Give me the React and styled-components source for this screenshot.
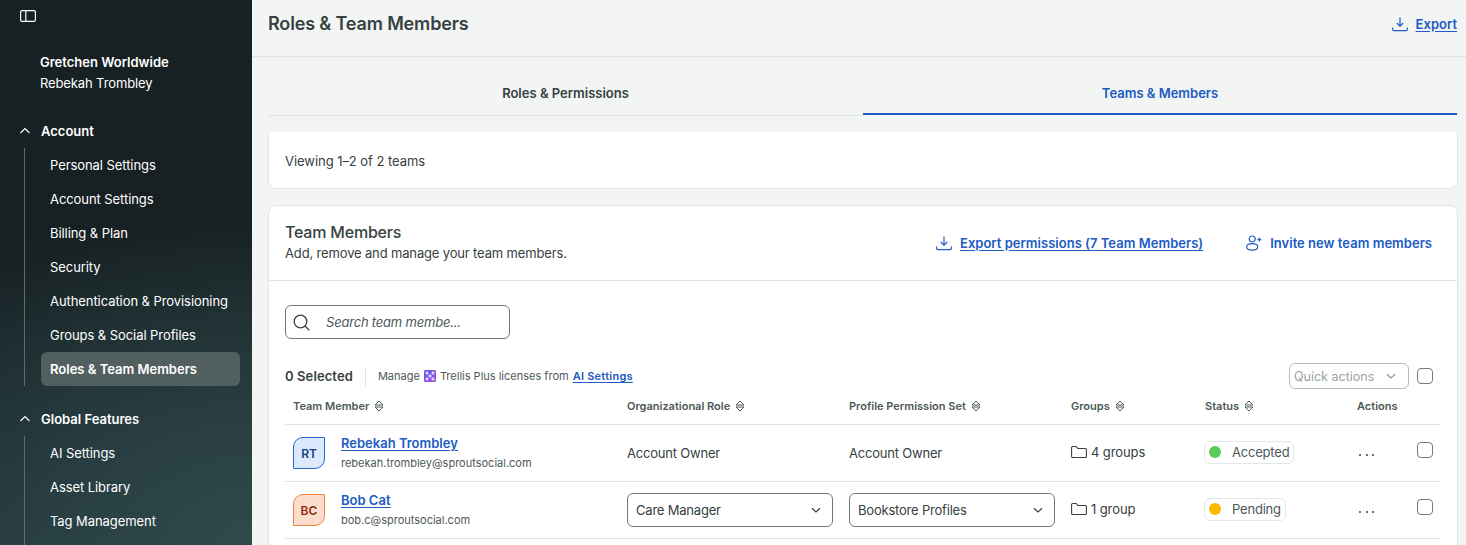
import React from 'react';
import styled, { createGlobalStyle } from 'styled-components';

const GlobalStyle = createGlobalStyle`
  html, body {
    margin: 0;
    padding: 0;
    height: 100%;
    overflow: hidden;
  }
  body {
    font-family: Inter, "Noto Sans", sans-serif;
    color: #364141;
    background: #f3f5f5;
  }
  * {
    box-sizing: border-box;
  }
`;

const Page = styled.div`
  display: flex;
  width: 1466px;
  height: 545px;
  overflow: hidden;
`;

const Sidebar = styled.aside`
  flex: 0 0 252px;
  height: 545px;
  padding: 8px 12px 0 20px;
  color: #fff;
  overflow: hidden;
  background:
    radial-gradient(420px 330px at 100% 100%, #30494a 0%, rgba(48, 73, 74, 0) 100%),
    linear-gradient(180deg, #172022 0%, #172022 42%, #21363e 100%);
`;

const CollapseButton = styled.div`
  display: flex;
  height: 16px;
  color: #fff;
`;

const Profile = styled.div`
  padding: 28px 0 0 20px;
  font-size: 13px;
  line-height: 21px;
  font-weight: 400;
  letter-spacing: -0.12px;
`;

const OrgName = styled.div`
  font-weight: 600;
  letter-spacing: 0;
`;

const NavSection = styled.section`
  margin-top: ${(p) => p.$top}px;
`;

const NavHeading = styled.div`
  display: flex;
  align-items: center;
  gap: 11px;
  height: 34px;
  font-size: 13px;
  font-weight: 600;
`;

const NavList = styled.ul`
  list-style: none;
  margin: 0 0 0 4px;
  padding: 0 0 ${(p) => p.$tail || 0}px 16px;
  border-left: 1px solid #5d6b6b;
`;

const NavItem = styled.li`
  display: flex;
  align-items: center;
  height: 34px;
  padding-left: 9px;
  border-radius: 6px;
  font-size: 13px;
  font-weight: ${(p) => (p.$active ? 600 : 400)};
  letter-spacing: ${(p) => (p.$active ? 0 : '-0.07px')};
  background: ${(p) => (p.$active ? '#525f5f' : 'transparent')};
  color: #fff;
  white-space: nowrap;
`;

const Main = styled.main`
  flex: 1;
  min-width: 0;
  padding: 0 8px 0 16px;
`;

const TopBar = styled.header`
  display: flex;
  align-items: center;
  justify-content: space-between;
  height: 57px;
  margin: 0 -8px 0 -16px;
  padding: 0 9px 9px 16px;
  border-bottom: 1px solid #dfe2e2;
`;

const PageTitle = styled.h1`
  margin: 0;
  font-size: 18px;
  line-height: 24px;
  font-weight: 600;
  letter-spacing: -0.15px;
  color: #364141;
`;

const ActionLink = styled.a`
  display: inline-flex;
  align-items: center;
  gap: 8px;
  font-size: 13px;
  font-weight: 600;
  letter-spacing: 0.02px;
  color: #205bc3;
  white-space: nowrap;

  span {
    text-decoration: ${(p) => (p.$plain ? 'none' : 'underline')};
    text-underline-offset: 2px;
  }
`;

const Tabs = styled.nav`
  display: grid;
  grid-template-columns: 595px 594px;
  height: 59px;
`;

const Tab = styled.div`
  display: flex;
  align-items: center;
  justify-content: center;
  padding-top: ${(p) => (p.$active ? 16 : 14)}px;
  margin-bottom: ${(p) => (p.$active ? 1 : 0)}px;
  font-size: 13px;
  font-weight: 600;
  color: ${(p) => (p.$active ? '#205bc3' : '#364141')};
  border-bottom: ${(p) => (p.$active ? '2px solid #205bc3' : '1px solid #dfe2e2')};
`;

const Card = styled.section`
  background: #fff;
  border: 1px solid #e2e5e5;
  border-radius: 8px;
`;

const ViewingCard = styled(Card)`
  display: flex;
  align-items: center;
  height: 57px;
  margin-top: 16px;
  padding: 2px 16px 0;
  border-top: 0;
  border-radius: 0 0 8px 8px;
  font-size: 13px;
  letter-spacing: -0.05px;
  color: #364141;
`;

const MembersCard = styled(Card)`
  margin-top: 16px;
  height: 400px;
`;

const CardHeader = styled.div`
  display: flex;
  align-items: center;
  justify-content: space-between;
  height: 75px;
  padding: 0 25px 0 16px;
  border-bottom: 1px solid #dfe2e2;
`;

const CardTitle = styled.h2`
  margin: 0;
  font-size: 16px;
  line-height: 20px;
  font-weight: 500;
  letter-spacing: -0.2px;
  color: #364141;
`;

const CardSubtitle = styled.p`
  margin: 3px 0 4px;
  font-size: 13px;
  line-height: 16px;
  letter-spacing: -0.15px;
  color: #364141;
`;

const HeaderActions = styled.div`
  display: flex;
  align-items: center;
  gap: 43px;
`;

const CardBody = styled.div`
  padding: 24px 16px 0;
`;

const SearchBox = styled.div`
  display: flex;
  align-items: center;
  gap: 16px;
  width: 225px;
  height: 34px;
  padding: 0 7px;
  border: 1px solid #6f7b7b;
  border-radius: 6px;
  font-size: 13px;
  font-style: italic;
  letter-spacing: -0.2px;
  color: #4d5959;
`;

const Toolbar = styled.div`
  display: flex;
  align-items: center;
  height: 26px;
  margin-top: 24px;
`;

const SelectedCount = styled.span`
  font-size: 13px;
  font-weight: 600;
  letter-spacing: 0.1px;
  color: #364141;
`;

const Divider = styled.span`
  width: 1px;
  height: 19px;
  margin: 0 12px;
  background: #dfe2e2;
`;

const ManageNote = styled.span`
  display: inline-flex;
  align-items: center;
  gap: 4px;
  font-size: 11px;
  color: #4d5959;

  a {
    font-weight: 600;
    letter-spacing: 0.25px;
    color: #205bc3;
    text-decoration: underline;
    text-underline-offset: 2px;
  }
`;

const ToolbarEnd = styled.div`
  display: flex;
  align-items: center;
  gap: 8px;
  margin-left: auto;
  padding-right: 8px;
`;

const QuickActions = styled.div`
  display: flex;
  align-items: center;
  justify-content: space-between;
  width: 120px;
  height: 26px;
  padding: 0 11px 0 4px;
  border: 1px solid #b5bcbc;
  border-radius: 6px;
  font-size: 12.5px;
  color: #9aa3a3;
`;

const Checkbox = styled.span`
  display: block;
  width: 16px;
  height: 16px;
  border: 1px solid #6f7b7b;
  border-radius: 4px;
  background: #fff;
`;

const Row = styled.div`
  display: grid;
  grid-template-columns: 334px 222px 222px 134px 152px 60px 24px;
  align-items: center;
  height: ${(p) => p.$height}px;
  padding-left: 8px;
  border-bottom: 1px solid #dfe2e2;
  font-size: 13px;
  color: #364141;
`;

const HeadCell = styled.div`
  display: flex;
  align-items: center;
  gap: 4px;
  margin-top: -2px;
  font-size: 11px;
  font-weight: 600;
  color: #4d5959;
`;

const Member = styled.div`
  display: flex;
  align-items: center;
  gap: 16px;
`;

const Avatar = styled.div`
  display: flex;
  align-items: center;
  justify-content: center;
  width: 32px;
  height: 32px;
  border: 1px solid ${(p) => p.$border};
  border-radius: 10px 0 10px 0;
  background: ${(p) => p.$bg};
  color: ${(p) => p.$color};
  font-size: 12px;
  font-weight: 600;
`;

const MemberName = styled.a`
  display: block;
  margin-top: -1px;
  font-size: 13px;
  line-height: 16px;
  font-weight: 600;
  color: #205bc3;
  text-decoration: underline;
  text-underline-offset: 2px;
`;

const MemberEmail = styled.div`
  margin-top: 5px;
  font-size: 11px;
  line-height: 14px;
  color: #4d5959;
`;

const RoleText = styled.div`
  margin-top: -1px;
  letter-spacing: -0.2px;
`;

const SelectBox = styled.div`
  display: flex;
  align-items: center;
  justify-content: space-between;
  width: 206px;
  height: 34px;
  padding: 0 10px 0 8px;
  border: 1px solid #6f7b7b;
  border-radius: 6px;
  font-size: 13px;
  letter-spacing: -0.2px;
  color: #364141;
`;

const GroupCell = styled.div`
  display: flex;
  align-items: center;
  gap: 4px;
  margin-top: -2px;
  letter-spacing: -0.1px;
`;

const StatusPill = styled.div`
  display: inline-flex;
  align-items: center;
  justify-self: start;
  gap: 11px;
  height: 23px;
  margin: -2px 0 0 -1px;
  padding: 0 4px;
  border: 1px solid #e4e7e7;
  border-radius: 6px;
  font-size: 13px;
  letter-spacing: -0.2px;
  color: #4d5959;
`;

const StatusDot = styled.span`
  width: 12px;
  height: 12px;
  border-radius: 50%;
  background: ${(p) => p.$color};
`;

const MoreDots = styled.div`
  display: flex;
  gap: 4.5px;
  margin-top: 3px;
  padding-left: 2px;

  i {
    width: 2px;
    height: 2px;
    border-radius: 50%;
    background: #364141;
  }
`;

const RowCheck = styled.div`
  margin-top: -7px;
`;

const Svg = ({ size = 16, children, ...rest }) => (
  <svg width={size} height={size} viewBox="0 0 16 16" fill="none" stroke="currentColor" style={{ flexShrink: 0 }} {...rest}>
    {children}
  </svg>
);

const PanelIcon = () => (
  <Svg>
    <rect x="0.6" y="2.6" width="14.8" height="10.8" rx="1.5" strokeWidth="1.2" />
    <path d="M5.8 2.5v11" strokeWidth="1.2" />
  </Svg>
);

const ChevronUp = () => (
  <Svg size={10} viewBox="0 0 10 10" strokeWidth="1.1">
    <path d="M0.5 7 5 2.5 9.5 7" />
  </Svg>
);

const ChevronDown = ({ size = 12, color }) => (
  <Svg size={size} viewBox="0 0 12 12" strokeWidth="1.2" style={{ color, flexShrink: 0 }}>
    <path d="M2 4.2 6 8l4-3.8" />
  </Svg>
);

const DownloadIcon = () => (
  <Svg strokeWidth="1.2">
    <path d="M8 1.5v8.5M4.8 7 8 10.2 11.2 7" />
    <path d="M0.7 11.6v2a1 1 0 0 0 1 1h12.6a1 1 0 0 0 1-1v-2" />
  </Svg>
);

const InviteIcon = () => (
  <Svg strokeWidth="1.2">
    <circle cx="6.2" cy="4" r="3" />
    <path d="M0.7 12c0-2 2.3-3.4 5.5-3.4s5.5 1.4 5.5 3.4c0 1.8-2.3 3.1-5.5 3.1S0.7 13.8 0.7 12Z" />
    <path d="M13.3 2.6v4M11.3 4.6h4" />
  </Svg>
);

const SearchIcon = () => (
  <Svg size={17} viewBox="0 0 17 17" strokeWidth="1.3" style={{ color: '#364141', flexShrink: 0 }}>
    <circle cx="7.5" cy="7.5" r="6.3" />
    <path d="m12 12 4.2 4.2" />
  </Svg>
);

const SortIcon = () => (
  <Svg size={12} viewBox="0 0 12 12" strokeWidth="1" strokeLinejoin="round" style={{ color: '#4d5959', flexShrink: 0 }}>
    <path d="M2 5 6 1l4 4Z" />
    <path d="M2 7l4 4 4-4Z" />
  </Svg>
);

const FolderIcon = () => (
  <Svg strokeWidth="1.1" style={{ color: '#364141', flexShrink: 0 }}>
    <path d="M0.6 3.5a1 1 0 0 1 1-1h3.6l1.6 2h7.6a1 1 0 0 1 1 1v7a1 1 0 0 1-1 1H1.6a1 1 0 0 1-1-1Z" />
  </Svg>
);

const TrellisIcon = () => (
  <svg width="12" height="12" viewBox="0 0 12 12" style={{ flexShrink: 0 }}>
    <defs>
      <linearGradient id="trellis-fill" x1="0" y1="0" x2="1" y2="1">
        <stop offset="0" stopColor="#4a5cf0" />
        <stop offset="0.55" stopColor="#8a4fe8" />
        <stop offset="1" stopColor="#a855e0" />
      </linearGradient>
    </defs>
    <rect width="12" height="12" rx="1.5" fill="url(#trellis-fill)" />
    <path d="M3 1 5 3 3 5 1 3ZM9 1l2 2-2 2-2-2ZM6 4l2 2-2 2-2-2ZM3 7l2 2-2 2-2-2ZM9 7l2 2-2 2-2-2Z" fill="#d9d2fb" />
  </svg>
);

const accountItems = [
  'Personal Settings',
  'Account Settings',
  'Billing & Plan',
  'Security',
  'Authentication & Provisioning',
  'Groups & Social Profiles',
  'Roles & Team Members',
];

const featureItems = ['AI Settings', 'Asset Library', 'Tag Management'];

const columns = ['Team Member', 'Organizational Role', 'Profile Permission Set', 'Groups', 'Status'];

const NavGroup = ({ title, items, top, active, tail }) => (
  <NavSection $top={top}>
    <NavHeading>
      <ChevronUp />
      {title}
    </NavHeading>
    <NavList $tail={tail}>
      {items.map((item) => (
        <NavItem key={item} $active={item === active}>
          {item}
        </NavItem>
      ))}
    </NavList>
  </NavSection>
);

const MemberRow = ({ initials, name, email, avatar, role, permission, groups, status, dot, editable }) => (
  <Row $height={57}>
    <Member>
      <Avatar {...avatar}>{initials}</Avatar>
      <div>
        <MemberName>{name}</MemberName>
        <MemberEmail>{email}</MemberEmail>
      </div>
    </Member>
    {editable ? (
      <SelectBox>
        {role}
        <ChevronDown />
      </SelectBox>
    ) : (
      <RoleText>{role}</RoleText>
    )}
    {editable ? (
      <SelectBox>
        {permission}
        <ChevronDown />
      </SelectBox>
    ) : (
      <RoleText>{permission}</RoleText>
    )}
    <GroupCell>
      <FolderIcon />
      {groups}
    </GroupCell>
    <StatusPill>
      <StatusDot $color={dot} />
      {status}
    </StatusPill>
    <MoreDots>
      <i />
      <i />
      <i />
    </MoreDots>
    <RowCheck>
      <Checkbox />
    </RowCheck>
  </Row>
);

const App = () => {
  return (
    <Page>
      <GlobalStyle />
      <Sidebar>
        <CollapseButton>
          <PanelIcon />
        </CollapseButton>
        <Profile>
          <OrgName>Gretchen Worldwide</OrgName>
          <div>Rebekah Trombley</div>
        </Profile>
        <NavGroup title="Account" items={accountItems} top={20} active="Roles & Team Members" />
        <NavGroup title="Global Features" items={featureItems} top={16} tail={34} />
      </Sidebar>
      <Main>
        <TopBar>
          <PageTitle>Roles &amp; Team Members</PageTitle>
          <ActionLink>
            <DownloadIcon />
            <span>Export</span>
          </ActionLink>
        </TopBar>
        <Tabs>
          <Tab>Roles &amp; Permissions</Tab>
          <Tab $active>Teams &amp; Members</Tab>
        </Tabs>
        <ViewingCard>Viewing 1–2 of 2 teams</ViewingCard>
        <MembersCard>
          <CardHeader>
            <div>
              <CardTitle>Team Members</CardTitle>
              <CardSubtitle>Add, remove and manage your team members.</CardSubtitle>
            </div>
            <HeaderActions>
              <ActionLink>
                <DownloadIcon />
                <span>Export permissions (7 Team Members)</span>
              </ActionLink>
              <ActionLink $plain>
                <InviteIcon />
                <span>Invite new team members</span>
              </ActionLink>
            </HeaderActions>
          </CardHeader>
          <CardBody>
            <SearchBox>
              <SearchIcon />
              Search team membe...
            </SearchBox>
            <Toolbar>
              <SelectedCount>0 Selected</SelectedCount>
              <Divider />
              <ManageNote>
                Manage <TrellisIcon /> Trellis Plus licenses from <a>AI Settings</a>
              </ManageNote>
              <ToolbarEnd>
                <QuickActions>
                  Quick actions
                  <ChevronDown color="#8b9595" />
                </QuickActions>
                <Checkbox />
              </ToolbarEnd>
            </Toolbar>
            <Row $height={36}>
              {columns.map((col) => (
                <HeadCell key={col}>
                  {col}
                  <SortIcon />
                </HeadCell>
              ))}
              <HeadCell>Actions</HeadCell>
            </Row>
            <MemberRow
              initials="RT"
              name="Rebekah Trombley"
              email="rebekah.trombley@sproutsocial.com"
              avatar={{ $border: '#2b66d0', $bg: '#dce9fd', $color: '#123f80' }}
              role="Account Owner"
              permission="Account Owner"
              groups="4 groups"
              status="Accepted"
              dot="#59cb59"
            />
            <MemberRow
              editable
              initials="BC"
              name="Bob Cat"
              email="bob.c@sproutsocial.com"
              avatar={{ $border: '#f0843f', $bg: '#fcdccd', $color: '#8f2e0c' }}
              role="Care Manager"
              permission="Bookstore Profiles"
              groups="1 group"
              status="Pending"
              dot="#ffb800"
            />
          </CardBody>
        </MembersCard>
      </Main>
    </Page>
  );
};

export default App;
